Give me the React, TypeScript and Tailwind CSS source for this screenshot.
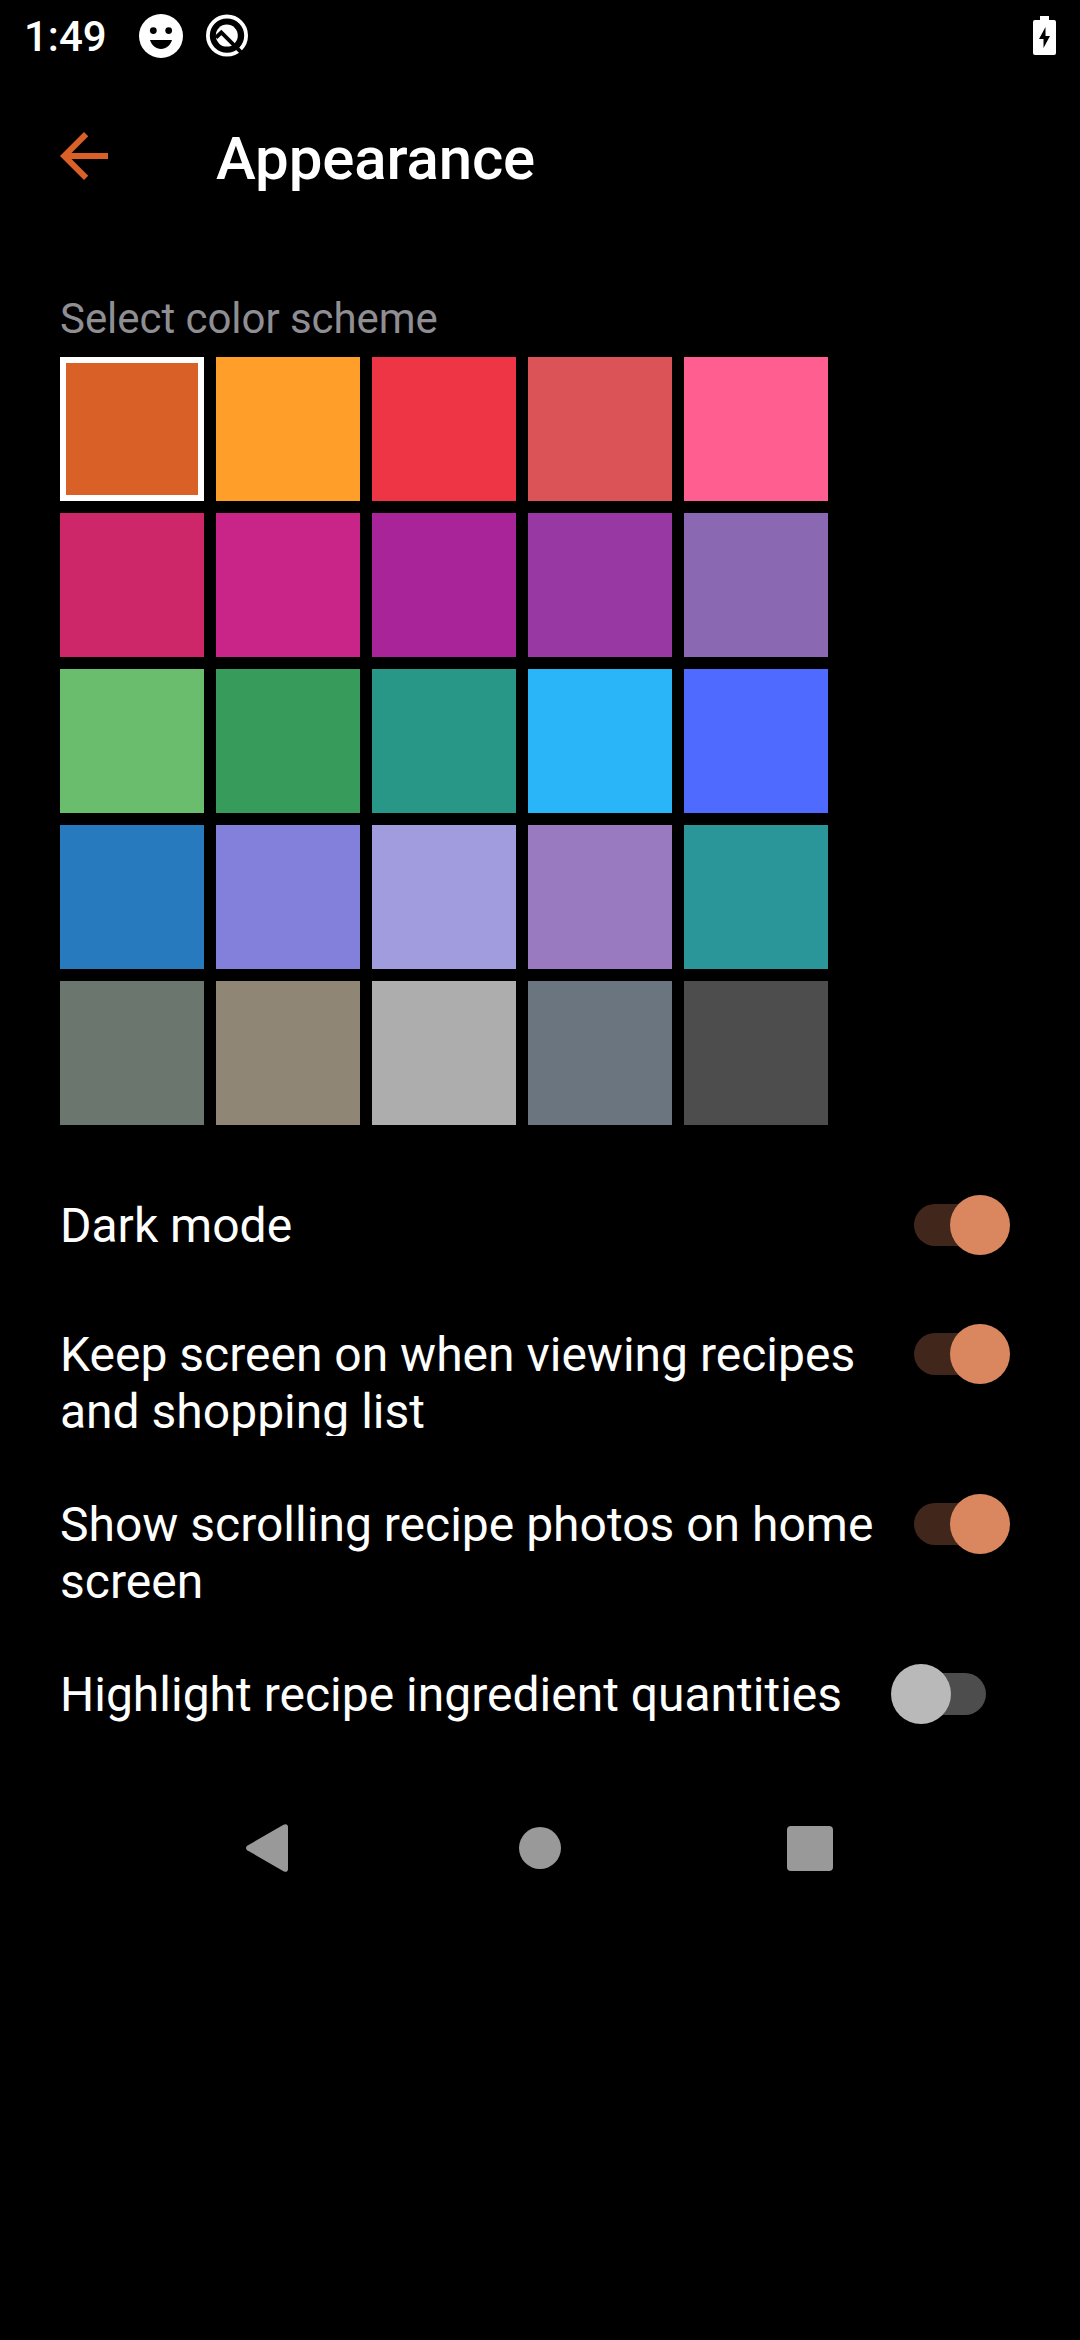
import React from "react";

const swatches: string[] = [
  "bg-[#d96127]", "bg-[#ff9f29]", "bg-[#ee3546]", "bg-[#db5356]", "bg-[#ff5e91]",
  "bg-[#cd276a]", "bg-[#c92488]", "bg-[#a82498]", "bg-[#9838a3]", "bg-[#8a69b2]",
  "bg-[#6abd6d]", "bg-[#379c5b]", "bg-[#289787]", "bg-[#29b5f8]", "bg-[#4f6aff]",
  "bg-[#287abe]", "bg-[#8280db]", "bg-[#a09cde]", "bg-[#997ac1]", "bg-[#2a9699]",
  "bg-[#6b766e]", "bg-[#908676]", "bg-[#adadad]", "bg-[#6b7580]", "bg-[#4d4d4d]",
];

function StatusBar() {
  return (
    <header className="flex h-[72px] items-center pl-[24px] pr-[24px]">
      <span className="w-[115px] pt-[2px] text-[42px] leading-[72px] font-medium">1:49</span>
      <svg className="h-[44px] w-[44px]" viewBox="0 0 44 44">
        <circle cx="22" cy="22" r="22" fill="#fff" />
        <circle cx="14.3" cy="16.6" r="3.4" fill="#000" />
        <circle cx="29.7" cy="16.6" r="3.4" fill="#000" />
        <path d="M11 26h22c-1.700 5.300-5.900 9-11 9s-9.300-3.700-11-9z" fill="#000" />
      </svg>
      <svg className="ml-[23px] h-[44px] w-[44px]" viewBox="0 0 44 44">
        <circle cx="21" cy="21.600" r="19.100" fill="none" stroke="#fff" strokeWidth="3.800" />
        <circle cx="20.800" cy="21.600" r="11" fill="#fff" />
        <path d="M10 23.500l5.300-5L35 38.200" fill="none" stroke="#000" strokeWidth="3.800" />
      </svg>
      <svg className="ml-auto h-[40px] w-[23px]" viewBox="0 0 23 40">
        <path d="M7 0h9v4h5a2 2 0 0 1 2 2v31a2 2 0 0 1-2 2H2a2 2 0 0 1-2-2V6a2 2 0 0 1 2-2h5z" fill="#fff" />
        <path d="M12.500 11v9H17l-6.500 12v-9H6z" fill="#000" />
      </svg>
    </header>
  );
}

function Toggle({ on }: { on: boolean }) {
  return (
    <span className={`relative mt-[9px] block h-[42px] w-[72px] shrink-0 rounded-full ${on ? "bg-[#41271b]" : "bg-[#4d4d4d]"}`}>
      <span
        className={`absolute -top-[9px] h-[60px] w-[60px] rounded-full ${on ? "left-[35.5px] bg-[#da875f]" : "-left-[23.5px] bg-[#b9b9b9]"}`}
      />
    </span>
  );
}

function Setting({ lines, on, height, clip }: { lines: string[]; on: boolean; height: string; clip?: boolean }) {
  return (
    <div className={`flex items-start justify-between pr-[94px] pl-[60px] ${height}`}>
      <div className={`mt-[3px] text-[48px] leading-[56.5px] whitespace-nowrap ${clip ? "h-[109px] overflow-hidden" : ""}`}>
        {lines.map((line) => (
          <div key={line}>{line}</div>
        ))}
      </div>
      <Toggle on={on} />
    </div>
  );
}

export default function App() {
  return (
    <div className="flex h-[2340px] w-[1080px] flex-col overflow-hidden bg-black font-['Roboto',sans-serif] text-white">
      <StatusBar />
      <div className="flex h-[168px] items-center pl-[48px]">
        <svg className="h-[72px] w-[72px] fill-[#d96127]" viewBox="0 0 24 24">
          <path d="M20 11H7.830l5.590-5.590L12 4l-8 8 8 8 1.410-1.410L7.830 13H20v-2z" />
        </svg>
        <h1 className="ml-[96px] pt-[6px] text-[60px] leading-[70px] font-medium tracking-[-0.15px]">Appearance</h1>
      </div>
      <p className="mt-[54px] h-[63px] pl-[60px] text-[42px] leading-[50px] tracking-[-0.05px] text-[#8e8e93]">Select color scheme</p>
      <div className="grid w-fit grid-cols-5 gap-3 pl-[60px]">
        {swatches.map((color, i) => (
          <div key={color} className={`h-[144px] w-[144px] ${color} ${i === 0 ? "border-[6px] border-white" : ""}`} />
        ))}
      </div>
      <div className="mt-[70px]">
        <Setting lines={["Dark mode"]} on height="h-[129px]" />
        <Setting lines={["Keep screen on when viewing recipes", "and shopping list"]} on height="h-[170px]" clip />
        <Setting lines={["Show scrolling recipe photos on home", "screen"]} on height="h-[170px]" />
        <Setting lines={["Highlight recipe ingredient quantities"]} on={false} height="h-[111px]" />
      </div>
      <nav className="mt-[43px] flex h-[60px] items-center pl-[246px]">
        <svg className="h-[48px] w-[42px] fill-[#999]" viewBox="0 0 42 48">
          <path d="M1.200 21.800L37.500.8C40 -.6 42 .4 42 3v42c0 2.600-2 3.600-4.500 2.200L1.200 26.200C-.4 25-.4 23 1.200 21.800z" />
        </svg>
        <span className="ml-[231px] h-[42px] w-[42px] rounded-full bg-[#999]" />
        <span className="ml-[226px] h-[45px] w-[46px] rounded-[4px] bg-[#999]" />
      </nav>
    </div>
  );
}
